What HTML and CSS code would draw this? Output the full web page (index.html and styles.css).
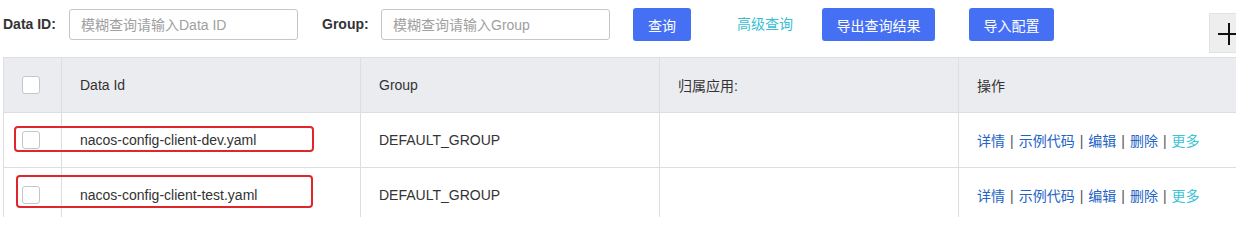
FILE: index.html
```html
<!DOCTYPE html>
<html lang="zh-CN">
<head>
    <meta charset="UTF-8">
    <meta name="viewport" content="width=device-width, initial-scale=1.0">
    <title>配置列表</title>
    <link rel="stylesheet" href="styles.css">
</head>
<body>
    <div class="page">
        <div class="toolbar">
            <label class="field-label">Data ID:</label>
            <input class="search-input" type="text" placeholder="模糊查询请输入Data ID">
            <label class="field-label group-label">Group:</label>
            <input class="search-input" type="text" placeholder="模糊查询请输入Group">
            <button class="btn btn-query">查询</button>
            <a class="link-advanced" href="#">高级查询</a>
            <button class="btn btn-export">导出查询结果</button>
            <button class="btn btn-import">导入配置</button>
            <div class="add-box">
                <svg width="40" height="40" viewBox="0 0 40 40">
                    <line x1="8" y1="20" x2="40" y2="20" stroke="#111" stroke-width="2"/>
                    <line x1="19" y1="9" x2="19" y2="31" stroke="#111" stroke-width="2"/>
                </svg>
            </div>
        </div>

        <div class="table-wrap">
            <table class="config-table">
                <colgroup>
                    <col class="col-check">
                    <col class="col-id">
                    <col class="col-group">
                    <col class="col-app">
                    <col class="col-ops">
                </colgroup>
                <thead>
                    <tr>
                        <th><span class="checkbox"></span></th>
                        <th>Data Id</th>
                        <th>Group</th>
                        <th>归属应用:</th>
                        <th>操作</th>
                    </tr>
                </thead>
                <tbody>
                    <tr>
                        <td class="mark-cell"><span class="checkbox"></span><span class="mark mark-1"></span></td>
                        <td>nacos-config-client-dev.yaml</td>
                        <td>DEFAULT_GROUP</td>
                        <td></td>
                        <td class="ops">
                            <a href="#">详情</a><span class="sep">|</span><a href="#">示例代码</a><span class="sep">|</span><a href="#">编辑</a><span class="sep">|</span><a href="#">删除</a><span class="sep">|</span><a class="more" href="#">更多</a>
                        </td>
                    </tr>
                    <tr>
                        <td class="mark-cell"><span class="checkbox"></span><span class="mark mark-2"></span></td>
                        <td>nacos-config-client-test.yaml</td>
                        <td>DEFAULT_GROUP</td>
                        <td></td>
                        <td class="ops">
                            <a href="#">详情</a><span class="sep">|</span><a href="#">示例代码</a><span class="sep">|</span><a href="#">编辑</a><span class="sep">|</span><a href="#">删除</a><span class="sep">|</span><a class="more" href="#">更多</a>
                        </td>
                    </tr>
                </tbody>
            </table>
        </div>
    </div>
</body>
</html>
```

FILE: styles.css
```css
body {
    margin: 0;
    background-color: #fff;
    font-family: "Liberation Sans", "Noto Sans CJK SC", sans-serif;
    font-size: 14px;
    color: #333;
}
.page {
    width: 1233px;
    margin-left: 3px;
    overflow: hidden;
}
.toolbar {
    display: flex;
    align-items: flex-start;
    height: 57px;
    white-space: nowrap;
}
.toolbar > * {
    flex-shrink: 0;
}
.field-label {
    font-weight: bold;
    color: #333;
    line-height: 18px;
    margin-top: 15px;
    width: 66px;
}
.group-label {
    margin-left: 24px;
    width: 59px;
}
.search-input {
    box-sizing: border-box;
    width: 229px;
    height: 31px;
    margin-top: 9px;
    padding: 0 11px;
    border: 1px solid #c4c6cf;
    border-radius: 3px;
    font-family: inherit;
    font-size: 14px;
    color: #333;
    outline: none;
}
.search-input::placeholder {
    color: #a0a0a0;
}
.btn {
    box-sizing: border-box;
    height: 33px;
    margin-top: 8px;
    padding: 0;
    border: none;
    border-radius: 3px;
    background-color: #4570f4;
    color: #fff;
    font-family: inherit;
    font-size: 14px;
    cursor: pointer;
}
.btn-query {
    width: 58px;
    margin-left: 23px;
}
.link-advanced {
    margin-left: 46px;
    margin-top: 15px;
    line-height: 18px;
    color: #38c0d2;
    text-decoration: none;
}
.btn-export {
    width: 113px;
    margin-left: 29px;
}
.btn-import {
    width: 85px;
    margin-left: 34px;
}
.add-box {
    width: 40px;
    height: 40px;
    margin-top: 13px;
    margin-left: 155px;
    background-color: #eeeeee;
    border: 1px solid #e2e2e2;
    box-sizing: border-box;
}
.add-box svg {
    display: block;
}
.table-wrap {
    height: 160px;
    overflow: hidden;
}
.config-table {
    width: 1288px;
    border-collapse: collapse;
    table-layout: fixed;
}
.col-check { width: 58px; }
.col-id { width: 299px; }
.col-group { width: 299px; }
.col-app { width: 299px; }
.col-ops { width: 333px; }
.config-table th,
.config-table td {
    height: 55px;
    box-sizing: border-box;
    padding: 0 0 0 18px;
    border: 1px solid #dcdee3;
    text-align: left;
    font-weight: normal;
    vertical-align: middle;
    color: #333;
}
.config-table thead th {
    background-color: #ebecf0;
}
.checkbox {
    display: block;
    width: 16px;
    height: 16px;
    border: 1px solid #c4c6cf;
    border-radius: 3px;
    background-color: #fff;
}
.mark-cell {
    position: relative;
}
.mark {
    position: absolute;
    border: 2px solid #e0262c;
    border-radius: 4px;
    box-sizing: border-box;
    pointer-events: none;
}
.mark-1 {
    left: 10px;
    top: 13px;
    width: 300px;
    height: 26px;
}
.mark-2 {
    left: 12px;
    top: 7px;
    width: 297px;
    height: 33px;
}
.ops a {
    color: #2463c6;
    text-decoration: none;
}
.ops a.more {
    color: #3cc3d6;
}
.sep {
    color: #555;
    margin: 0 5px;
}
```
